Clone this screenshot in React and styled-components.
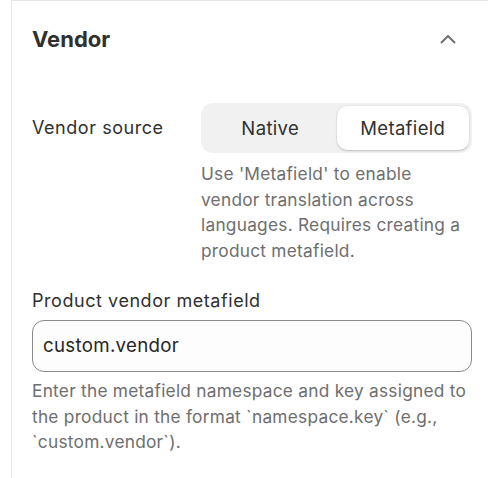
import React, { useState } from "react";
import styled, { createGlobalStyle } from "styled-components";

const GlobalStyle = createGlobalStyle`
  body {
    margin: 0;
    background: #ffffff;
    font-family: Inter, "Noto Sans", "Liberation Sans", sans-serif;
    overflow: hidden;
  }
`;

const Card = styled.section`
  margin-left: 11px;
  border-left: 1px solid #e6e6e6;
  border-top: 1px solid #e6e6e6;
  padding: 18px 16px 40px 20px;
  min-height: 478px;
  box-sizing: border-box;
  color: #303030;
`;

const Header = styled.div`
  display: flex;
  align-items: center;
  justify-content: space-between;
  height: 40px;
`;

const Title = styled.h2`
  margin: 0;
  font-size: 22px;
  font-weight: 650;
  color: #303030;
`;

const Toggle = styled.button`
  width: 32px;
  height: 32px;
  margin-right: 8px;
  border: none;
  background: transparent;
  display: flex;
  align-items: center;
  justify-content: center;
  padding: 0;
  cursor: pointer;
`;

const Row = styled.div`
  display: grid;
  grid-template-columns: 169px 1fr;
  align-items: center;
  margin-top: 44px;
`;

const Label = styled.span`
  font-size: 18px;
  line-height: 26px;
  letter-spacing: 0.55px;
  color: #303030;
`;

const Segmented = styled.div`
  display: grid;
  grid-template-columns: 1fr 1fr;
  padding: 3px;
  height: 50px;
  box-sizing: border-box;
  background: #f1f1f1;
  border-radius: 12px;
`;

const Segment = styled.button`
  border: none;
  border-radius: 10px;
  font-family: inherit;
  font-size: 18.5px;
  letter-spacing: 0.35px;
  color: #303030;
  cursor: pointer;
  background: ${(p) => (p.$active ? "#ffffff" : "transparent")};
  box-shadow: ${(p) =>
    p.$active
      ? "0 1px 2px rgba(0,0,0,0.18), 0 0 0 0.5px rgba(0,0,0,0.06)"
      : "none"};
`;

const Help = styled.p`
  margin: ${(p) => p.$top || "8px"} 0 0 ${(p) => p.$indent || "0"};
  font-size: 17.3px;
  line-height: 25.7px;
  letter-spacing: 0.25px;
  color: #6e6e6e;
`;

const Field = styled.div`
  margin-top: 24px;
`;

const Input = styled.input`
  display: block;
  width: 100%;
  box-sizing: border-box;
  height: 52px;
  margin-top: 6px;
  padding: 0 10px;
  border: 1px solid #8a8a8a;
  border-radius: 12px;
  background: #fdfdfd;
  font-family: inherit;
  font-size: 18.7px;
  letter-spacing: 0.3px;
  color: #262626;
  outline: none;
`;

export default function App() {
  const [source, setSource] = useState("metafield");
  const [value, setValue] = useState("custom.vendor");

  return (
    <>
      <GlobalStyle />
      <Card>
        <Header>
          <Title>Vendor</Title>
          <Toggle aria-label="Collapse">
            <svg width="16" height="10" viewBox="0 0 16 10" fill="none">
              <path
                d="M1.5 8.5L8 2L14.5 8.5"
                stroke="#6b6b6b"
                strokeWidth="1.8"
                strokeLinecap="round"
                strokeLinejoin="round"
              />
            </svg>
          </Toggle>
        </Header>

        <Row>
          <Label>Vendor source</Label>
          <Segmented>
            <Segment
              $active={source === "native"}
              onClick={() => setSource("native")}
            >
              Native
            </Segment>
            <Segment
              $active={source === "metafield"}
              onClick={() => setSource("metafield")}
            >
              Metafield
            </Segment>
          </Segmented>
        </Row>
        <Help $indent="169px">
          Use 'Metafield' to enable vendor translation across languages.
          Requires creating a product metafield.
        </Help>

        <Field>
          <Label>Product vendor metafield</Label>
          <Input value={value} onChange={(e) => setValue(e.target.value)} />
          <Help $top="6px">
            Enter the metafield namespace and key assigned to the product in
            the format `namespace.key` (e.g., `custom.vendor`).
          </Help>
        </Field>
      </Card>
    </>
  );
}
